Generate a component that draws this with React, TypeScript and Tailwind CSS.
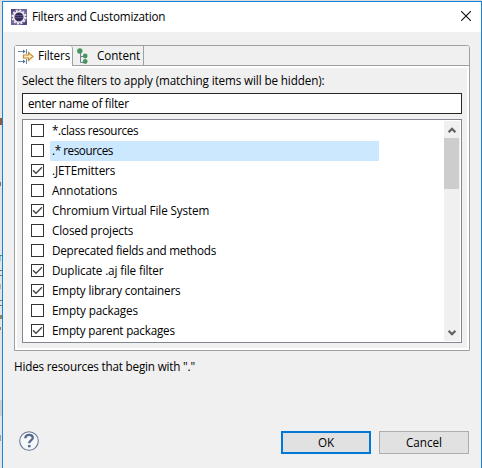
const rows = [
  { label: '*.class resources', on: false, track: 'tracking-[-0.36px]' },
  { label: '.* resources', on: false, track: 'tracking-[-0.44px]', selected: true },
  { label: '.JETEmitters', on: true, track: 'tracking-[-0.12px]' },
  { label: 'Annotations', on: false, track: 'tracking-[-0.1px]' },
  { label: 'Chromium Virtual File System', on: true, track: 'tracking-[-0.12px]' },
  { label: 'Closed projects', on: false, track: 'tracking-[-0.15px]' },
  { label: 'Deprecated fields and methods', on: false, track: 'tracking-[-0.24px]' },
  { label: 'Duplicate .aj file filter', on: true, track: 'tracking-[-0.14px]' },
  { label: 'Empty library containers', on: true, track: 'tracking-[-0.19px]' },
  { label: 'Empty packages', on: false, track: 'tracking-[-0.14px]' },
  { label: 'Empty parent packages', on: true, track: 'tracking-[-0.21px]' },
];

function EclipseIcon() {
  return (
    <svg width="16" height="16" viewBox="0 0 16 16">
      <rect width="16" height="16" fill="#75649b" />
      <path d="M0 0h5L0 6zM16 11v5h-6z" fill="#55437f" />
      <circle cx="8" cy="8" r="6.6" fill="none" stroke="#efedf2" strokeWidth="1.8" strokeDasharray="2 1.456" />
      <circle cx="8" cy="8" r="5.3" fill="#342a55" stroke="#efedf2" strokeWidth="1.6" />
      <path d="M3.8 6.5h8.4M3.6 8.5h8.8" stroke="#6c608e" strokeWidth=".8" />
    </svg>
  );
}

function FiltersIcon() {
  return (
    <svg width="16" height="16" viewBox="0 0 16 16" fill="none">
      <path d="M0 3.5h7M8.5 1v5M0 13.5h7M8.5 11v5" stroke="#6a8ca8" />
      <path d="M5 1.5l2.5 2L5 5.5zM5 11.5l2.5 2L5 15.5z" fill="#456f91" />
      <path d="M5.5 7h5V4.5l4.5 4-4.5 4V10h-5z" fill="#fbecc0" stroke="#c08a32" strokeWidth="1.2" />
    </svg>
  );
}

function ContentIcon() {
  return (
    <svg width="11" height="16" viewBox="0 0 11 16">
      <path d="M3.5 5v9.5H7M3.5 8.5H7" fill="none" stroke="#71808c" />
      <circle cx="2.8" cy="3" r="2.7" fill="#479660" />
      <circle cx="8.2" cy="8" r="2.4" fill="#479660" />
      <circle cx="8.2" cy="13.5" r="2.4" fill="#479660" />
    </svg>
  );
}

function Checkbox({ on }: { on: boolean }) {
  return (
    <span className="mt-[3px] h-[13px] w-[13px] shrink-0 border border-[#333] bg-white">
      {on && (
        <svg width="11" height="11" viewBox="0 0 11 11">
          <path d="M1 5.3l3 3L10 2.3" fill="none" stroke="#444" strokeWidth="1.3" />
        </svg>
      )}
    </span>
  );
}

function Chevron({ down = false }: { down?: boolean }) {
  return (
    <svg width="8" height="7" viewBox="0 0 8 7" className={down ? 'rotate-180' : ''}>
      <path d="M.6 5.2L4 1.8l3.4 3.4" fill="none" stroke="#606060" strokeWidth="2.3" />
    </svg>
  );
}

export default function App() {
  return (
    <div className="flex h-[468px] w-[482px] overflow-hidden bg-[#d9dbdc] pt-px font-['Open_Sans','Noto_Sans',sans-serif] text-[11.7px] leading-[16px] text-black">
      <div className="relative w-[2px] shrink-0 overflow-hidden bg-[#e2e5e7]">
        <i className="absolute top-[117px] h-[7px] w-[2px] bg-[#8e5b3c]" />
        <i className="absolute top-[181px] h-[4px] w-px bg-[#777]" />
        <i className="absolute top-[254px] h-px w-[2px] bg-[#3f8598]" />
        <i className="absolute top-[255px] h-[5px] w-px bg-[#8fc5e4]" />
        <i className="absolute top-[269px] h-px w-[2px] bg-[#527f75]" />
        <i className="absolute top-[274px] h-px w-[2px] bg-[#527f75]" />
        <i className="absolute top-[283px] h-[5px] w-px bg-[#a8b9a8]" />
        <i className="absolute top-[299px] h-px w-[2px] bg-[#527f75]" />
        <i className="absolute top-[304px] h-px w-[2px] bg-[#527f75]" />
        <i className="absolute top-[314px] h-[4px] w-[2px] bg-[#8a8565]" />
        <i className="absolute top-[326px] h-[3px] w-px bg-[#8a8565]" />
        <i className="absolute top-[399px] h-[16px] w-[2px] bg-[#ccd0d4]" />
        <i className="absolute top-[434px] h-[6px] w-px bg-[#8da3b0]" />
      </div>
      <div className="flex h-[467px] w-[480px] flex-col border-x border-t border-[#1883d7] bg-[#f0f0f0]">
        <header className="flex h-[30px] shrink-0 items-center bg-white pl-[8px] pr-[10px]">
          <EclipseIcon />
          <span className="ml-[5px] pb-[2px] tracking-[-0.2px]">Filters and Customization</span>
          <svg className="ml-auto mb-[2px]" width="10" height="10" viewBox="0 0 10 10">
            <path d="M0 0l10 10M10 0L0 10" stroke="#111" strokeWidth="1.1" />
          </svg>
        </header>

        <section className="ml-[11px] mt-[13px] flex h-[306px] w-[456px] shrink-0 flex-col rounded-t-[3px] border border-[#a0a0a0] bg-white">
          <div className="flex h-[20px] shrink-0 rounded-t-[2px] bg-[#f0f0f0]">
            <div className="flex w-[58px] items-center rounded-tr-[3px] border-r border-[#a0a0a0] bg-white pl-[3px]">
              <FiltersIcon />
              <span className="ml-[4px] pb-[2px] tracking-[-0.12px]">Filters</span>
            </div>
            <div className="flex w-[71px] items-center border-b border-r border-[#a0a0a0] pl-[4px]">
              <ContentIcon />
              <span className="ml-[9px] pb-px tracking-[-0.08px]">Content</span>
            </div>
            <div className="flex-1 border-b border-[#a0a0a0]" />
          </div>
          <div className="mx-[2px] mb-[2px] mt-[2px] flex flex-1 flex-col bg-[#f0f0f0] pl-[5px] pt-[4px]">
            <span className="h-[21px] whitespace-nowrap tracking-[-0.12px]">Select the filters to apply (matching items will be hidden):</span>
            <div className="flex h-[21px] w-[440px] shrink-0 items-center border border-[#262626] bg-white pb-px pl-[5px] tracking-[-0.25px]">enter name of filter</div>
            <div className="mt-[5px] flex h-[224px] w-[440px] shrink-0 border border-[#828790] bg-white p-px">
              <div className="flex-1">
                {rows.map((r) => (
                  <div key={r.label} className="flex h-[20px] items-start pl-[7px]">
                    <Checkbox on={r.on} />
                    <span className={`ml-[6px] flex h-[20px] w-[329px] items-center whitespace-nowrap pb-[2px] pl-[2px] ${r.track} ${r.selected ? 'bg-[#cce8ff]' : ''}`}>{r.label}</span>
                  </div>
                ))}
              </div>
              <div className="flex w-[16px] shrink-0 flex-col items-center bg-[#f0f0f0]">
                <div className="flex h-[17px] shrink-0 items-center pt-px"><Chevron /></div>
                <div className="h-[51px] w-full shrink-0 border-r border-[#f0f0f0] bg-[#cdcdcd]" />
                <div className="mt-auto flex h-[17px] shrink-0 items-center"><Chevron down /></div>
              </div>
            </div>
          </div>
        </section>

        <p className="ml-[11px] mt-[7px] tracking-[-0.19px]">Hides resources that begin with "."</p>

        <footer className="mt-auto flex h-[37px] items-start pl-[16px] pr-[12px]">
          <svg width="20" height="20" viewBox="0 0 20 20" fill="none">
            <circle cx="10" cy="10" r="9.3" fill="#f6f7f9" stroke="#687996" strokeWidth="1.1" />
            <path d="M6.3 7.2C6.4 4.9 7.8 3.8 10 3.8c2.3 0 3.8 1.1 3.8 2.9 0 2.7-3.6 2.6-3.6 5.6" stroke="#566a8d" strokeWidth="2.3" />
            <rect x="9" y="14" width="2.5" height="2.3" fill="#566a8d" />
          </svg>
          <button className="ml-auto h-[23px] w-[90px] border-2 border-[#0078d7] bg-[#e1e1e1] pb-px tracking-[-0.08px]">OK</button>
          <button className="ml-[8px] h-[23px] w-[90px] border border-[#adadad] bg-[#e1e1e1] pb-px tracking-[0px]">Cancel</button>
        </footer>
      </div>
    </div>
  );
}
